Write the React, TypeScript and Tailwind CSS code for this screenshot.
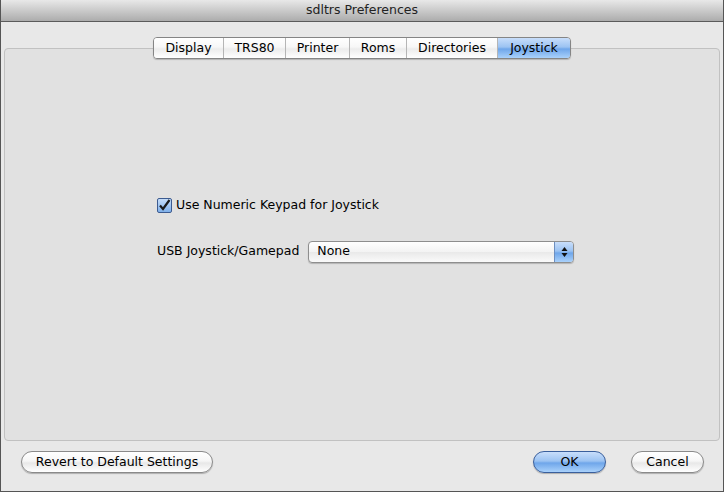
import React from "react";

const tabs = [
  { label: "Display", w: 69 },
  { label: "TRS80", w: 62 },
  { label: "Printer", w: 64 },
  { label: "Roms", w: 57 },
  { label: "Directories", w: 91 },
  { label: "Joystick", w: 73, active: true },
];

function AquaButton({ children, width, primary }: { children: React.ReactNode; width: string; primary?: boolean }) {
  return (
    <button
      className={
        "h-[22px] rounded-full border text-[12.5px] text-black flex items-center justify-center shadow-[0_1px_1px_rgba(0,0,0,0.25)] " +
        width +
        (primary
          ? " border-[#3a5f9c] bg-[linear-gradient(to_bottom,#c8defb_0%,#9cc3f2_45%,#6fa6ea_55%,#a9d1fb_100%)]"
          : " border-[#8a8a8a] bg-[linear-gradient(to_bottom,#ffffff_0%,#f6f6f6_45%,#e8e8e8_55%,#ffffff_100%)]")
      }
    >
      {children}
    </button>
  );
}

export default function App() {
  return (
    <div
      className="w-[724px] h-[492px] bg-[#e8e8e8] border-x border-b border-[#555] flex flex-col overflow-hidden"
      style={{ fontFamily: '"DejaVu Sans", "Noto Sans", sans-serif' }}
    >
      {/* title bar */}
      <div className="h-[22px] shrink-0 border-b border-[#5b5b5b] bg-[linear-gradient(to_bottom,#e8e8e8,#acacac)] flex items-center justify-center text-[12.5px] text-[#222]">
        sdltrs Preferences
      </div>

      {/* tab view */}
      <div className="relative px-[3px] pt-[26px]">
        <div className="h-[393px] rounded-[4px] border border-[#c1c1c1] bg-[#e1e1e1] flex flex-col items-start pl-[152px] pt-[147px]">
          <label className="flex items-center gap-[4px] text-[12.5px] text-black">
            <span className="w-[15px] h-[15px] rounded-[2px] border border-[#3c5b90] bg-[linear-gradient(to_bottom,#c5dcf8,#7fb0ea)] flex items-center justify-center">
              <svg width="13" height="13" viewBox="0 0 13 13">
                <path d="M2 6.5 L5 10 L11.5 1" fill="none" stroke="#1a1a1a" strokeWidth="2.2" />
              </svg>
            </span>
            Use Numeric Keypad for Joystick
          </label>

          <div className="flex items-center mt-[26px] text-[12.5px] text-black">
            <span>USB Joystick/Gamepad</span>
            <div className="ml-[9px] w-[266px] h-[22px] rounded-[4px] border border-[#8e8e8e] flex overflow-hidden bg-[linear-gradient(to_bottom,#ffffff,#f3f3f3_50%,#e9e9e9_51%,#fafafa)] shadow-[0_1px_1px_rgba(0,0,0,0.2)]">
              <span className="flex-1 pl-[8px] flex items-center">None</span>
              <span className="w-[19px] border-l border-[#6d8fc0] bg-[linear-gradient(to_bottom,#c8defb_0%,#9cc3f2_45%,#6fa6ea_55%,#a9d1fb_100%)] flex items-center justify-center">
                <svg width="7" height="12" viewBox="0 0 7 12">
                  <path d="M3.5 1 L6.5 5 L0.5 5 Z M0.5 7 L6.5 7 L3.5 11 Z" fill="#111" />
                </svg>
              </span>
            </div>
          </div>
        </div>

        {/* tab strip overlapping the box */}
        <div className="absolute left-[152px] top-[15px] flex h-[22px] rounded-[4px] border border-[#858585] overflow-hidden shadow-[0_1px_1px_rgba(0,0,0,0.2)]">
          {tabs.map((t, i) => (
            <div
              key={t.label}
              style={{ width: t.w }}
              className={
                "flex items-center justify-center text-[12.5px] text-black " +
                (i > 0 ? "border-l border-[#b5b5b5] " : "") +
                (t.active
                  ? "bg-[linear-gradient(to_bottom,#c8defb_0%,#9cc3f2_45%,#6fa6ea_55%,#a9d1fb_100%)]"
                  : "bg-[linear-gradient(to_bottom,#ffffff_0%,#f7f7f7_45%,#ececec_55%,#ffffff_100%)]")
              }
            >
              {t.label}
            </div>
          ))}
        </div>
      </div>

      {/* bottom buttons */}
      <div className="flex items-center pl-[20px] pr-[19px] pt-[10px]">
        <AquaButton width="w-[192px]">Revert to Default Settings</AquaButton>
        <div className="flex-1" />
        <AquaButton width="w-[73px]" primary>
          OK
        </AquaButton>
        <div className="w-[25px]" />
        <AquaButton width="w-[73px]">Cancel</AquaButton>
      </div>
    </div>
  );
}
